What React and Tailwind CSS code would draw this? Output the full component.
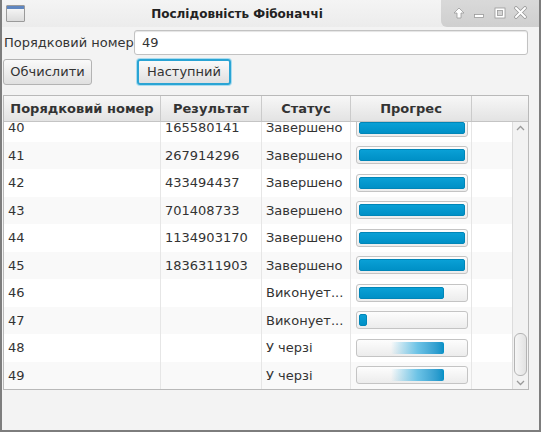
const rows = [
  { n: 40, r: "165580141", s: "Завершено", p: 1 },
  { n: 41, r: "267914296", s: "Завершено", p: 1 },
  { n: 42, r: "433494437", s: "Завершено", p: 1 },
  { n: 43, r: "701408733", s: "Завершено", p: 1 },
  { n: 44, r: "1134903170", s: "Завершено", p: 1 },
  { n: 45, r: "1836311903", s: "Завершено", p: 1 },
  { n: 46, r: "", s: "Виконует...", p: 0.8 },
  { n: 47, r: "", s: "Виконует...", p: 0.06 },
  { n: 48, r: "", s: "У черзі", p: -1 },
  { n: 49, r: "", s: "У черзі", p: -1 },
];

const font = { fontFamily: '"DejaVu Sans", Verdana, sans-serif' };

function Progress({ value }) {
  return (
    <div className="relative h-[18px] w-[112px] rounded-[3px] border border-[#c4c4c4] bg-gradient-to-b from-[#fdfdfd] to-[#ececec] p-[2px]">
      {value >= 0 ? (
        <div
          className="h-full rounded-[2px] border border-[#0086b8] bg-gradient-to-b from-[#0aa0d6] to-[#0090c6]"
          style={{ width: `${Math.max(value * 100, 8)}%` }}
        />
      ) : (
        <div className="ml-[32px] h-full w-[53px] rounded-r-[2px] bg-gradient-to-r from-[#ffffff00] via-[#6cc3e6] to-[#0090c6]" />
      )}
    </div>
  );
}

function TitleButtons() {
  return (
    <div className="flex h-full w-[98px] items-center justify-around rounded-bl-[6px] bg-gradient-to-b from-[#d9d9d9] to-[#cfcfcf] px-[8px] pb-[2px]">
      <svg width="12" height="12" viewBox="0 0 12 12">
        <path d="M6 1 L11 6 H8 V11 H4 V6 H1 Z" fill="#fff" stroke="#9a9a9a" strokeWidth="0.8" />
      </svg>
      <svg width="12" height="12" viewBox="0 0 12 12">
        <rect x="1.5" y="7.5" width="9" height="3" fill="#fff" stroke="#9a9a9a" strokeWidth="0.8" />
      </svg>
      <svg width="12" height="12" viewBox="0 0 12 12">
        <rect x="1" y="1" width="10" height="10" fill="#fff" stroke="#9a9a9a" strokeWidth="0.8" />
        <rect x="3.5" y="3.5" width="5" height="5" fill="#d4d4d4" stroke="#9a9a9a" strokeWidth="0.8" />
      </svg>
      <svg width="13" height="13" viewBox="0 0 13 13">
        <path d="M2 2 L11 11 M11 2 L2 11" stroke="#9a9a9a" strokeWidth="3.6" strokeLinecap="round" />
        <path d="M2 2 L11 11 M11 2 L2 11" stroke="#fff" strokeWidth="2" strokeLinecap="round" />
      </svg>
    </div>
  );
}

export default function App() {
  return (
    <div
      className="flex h-[432px] w-[541px] flex-col overflow-hidden border-x-2 border-b-2 border-[#7d7d7d] bg-[#f3f3f3] text-[13px] text-[#333]"
      style={font}
    >
      <div className="flex h-[27px] shrink-0 items-center bg-gradient-to-b from-[#f4f4f4] to-[#ececec]">
        <div className="ml-[4px] h-[17px] w-[19px] rounded-[1px] border border-[#9a9a9a] bg-gradient-to-b from-[#fafafa] to-[#dcdcdc]">
          <div className="h-[3px] bg-[#5f86c0]" />
        </div>
        <div className="flex-1 pl-[8px] text-center text-[12px] font-bold text-[#222]">Послідовність Фібоначчі</div>
        <TitleButtons />
      </div>

      <div className="mt-[3px] flex items-center pl-[2px] pr-[11px]">
        <span className="w-[130px]">Порядковий номер</span>
        <div className="flex h-[25px] flex-1 items-center rounded-[3px] border border-[#c2c2c2] bg-white pl-[7px] shadow-[inset_0_1px_1px_#e4e4e4]">
          49
        </div>
      </div>

      <div className="mt-[4px] flex items-center gap-[45px] pl-[1px]">
        <button className="h-[26px] w-[89px] rounded-[3px] border border-[#b3b3b3] bg-gradient-to-b from-[#fafafa] to-[#e0e0e0] text-[13px] text-[#333]">
          Обчислити
        </button>
        <button className="h-[26px] w-[94px] rounded-[3px] border-2 border-[#2aa4d4] bg-gradient-to-b from-[#fafafa] to-[#e0e0e0] text-[13px] text-[#333] shadow-[0_0_0_1px_#a8dcf0]">
          Наступний
        </button>
      </div>

      <div className="mt-[10px] ml-[1px] flex h-[295px] w-[526px] flex-col border border-[#b9b9b9] bg-white">
        <div className="grid h-[26px] shrink-0 grid-cols-[157px_101px_89px_121px_1fr] border-b border-[#c4c4c4] bg-gradient-to-b from-[#f7f7f7] to-[#e3e3e3] font-bold">
          {["Порядковий номер", "Результат", "Статус", "Прогрес", ""].map((h, i) => (
            <div key={i} className="flex items-center justify-center border-r border-[#cbcbcb] last:border-r-0">
              {h}
            </div>
          ))}
        </div>
        <div className="flex min-h-0 flex-1">
          <div className="flex-1 overflow-hidden">
            <div className="-mt-[8px]">
              {rows.map((row) => (
                <div
                  key={row.n}
                  className={`grid h-[27.5px] grid-cols-[157px_101px_89px_121px_1fr] ${row.n % 2 ? "bg-[#f9f9f9]" : "bg-white"}`}
                >
                  <div className="flex items-center border-r border-[#e6e6e6] pl-[4px]">{row.n}</div>
                  <div className="flex items-center border-r border-[#e6e6e6] pl-[4px]">{row.r}</div>
                  <div className="flex items-center overflow-hidden whitespace-nowrap border-r border-[#e6e6e6] pl-[4px]">{row.s}</div>
                  <div className="flex items-center border-r border-[#e6e6e6] pl-[5px]">
                    <Progress value={row.p} />
                  </div>
                  <div />
                </div>
              ))}
            </div>
          </div>
          <div className="flex w-[16px] shrink-0 flex-col items-center justify-between border-l border-[#dcdcdc] bg-[#f2f2f2] py-[3px]">
            <svg width="9" height="6" viewBox="0 0 9 6">
              <path d="M1 5 L4.5 1.5 L8 5" fill="none" stroke="#9a9a9a" strokeWidth="1.3" />
            </svg>
            <div className="mt-auto mb-[4px] h-[43px] w-[13px] rounded-[6px] border border-[#b4b4b4] bg-gradient-to-r from-[#f6f6f6] to-[#e2e2e2]" />
            <svg width="9" height="6" viewBox="0 0 9 6">
              <path d="M1 1 L4.5 4.5 L8 1" fill="none" stroke="#9a9a9a" strokeWidth="1.3" />
            </svg>
          </div>
        </div>
      </div>
    </div>
  );
}
